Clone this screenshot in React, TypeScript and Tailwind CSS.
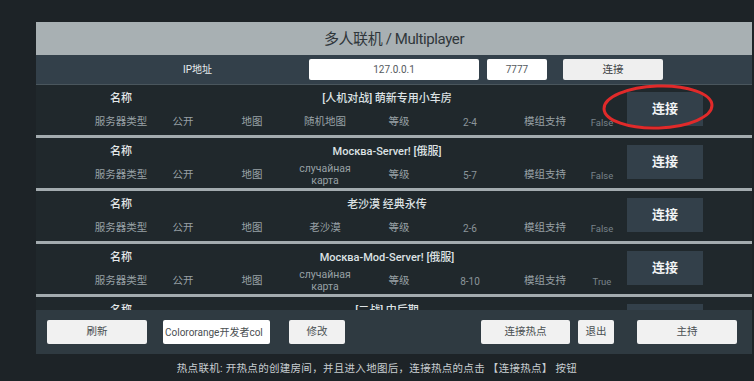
import React from "react";

type Server = { name: string; type: string; map: string[]; level: string; mod: string; partial?: boolean };

const servers: Server[] = [
  { name: "[人机对战] 萌新专用小车房", type: "公开", map: ["随机地图"], level: "2-4", mod: "False" },
  { name: "Москва-Server! [俄服]", type: "公开", map: ["случайная", "карта"], level: "5-7", mod: "False" },
  { name: "老沙漠 经典永传", type: "公开", map: ["老沙漠"], level: "2-6", mod: "False" },
  { name: "Москва-Mod-Server! [俄服]", type: "公开", map: ["случайная", "карта"], level: "8-10", mod: "True" },
  { name: "[二战] 中后期", type: "公开", map: ["随机地图"], level: "2-4", mod: "False", partial: true },
];

const cols = "grid grid-cols-[70px_54px_84px_62px_86px_56px_94px_20px]";

function Cell({ children, className = "" }: { children: React.ReactNode; className?: string }) {
  return <div className={`flex flex-col items-center justify-center whitespace-nowrap ${className}`}>{children}</div>;
}

function Row({ s }: { s: Server }) {
  return (
    <div className={`${s.partial ? "h-[14px] overflow-hidden" : "h-[50px]"} shrink-0 bg-[#20282c] flex`}>
      <div className="w-[591px] pl-[50px] flex flex-col">
        <div className={`${cols} h-[20px] mt-[4px] shrink-0`}>
          <Cell className="text-[11px] font-medium text-[#e4e8ea]">名称</Cell>
          <div className="col-span-7 flex items-center justify-center pl-[6px] text-[11px] font-medium text-[#dde2e4] whitespace-nowrap">
            {s.name}
          </div>
        </div>
        {!s.partial && (
          <div className={`${cols} h-[26px]`}>
            <Cell className="text-[10.5px] text-[#98a1a6]">服务器类型</Cell>
            <Cell className="text-[10.5px] text-[#98a1a6]">{s.type}</Cell>
            <Cell className="text-[10.5px] text-[#98a1a6]">地图</Cell>
            <Cell className="text-[10.5px] leading-[12px] text-[#98a1a6]">
              {s.map.map((m) => (
                <span key={m}>{m}</span>
              ))}
            </Cell>
            <Cell className="text-[10.5px] text-[#98a1a6]">等级</Cell>
            <Cell className="text-[10px] text-[#8b959a]">{s.level}</Cell>
            <Cell className="text-[10.5px] text-[#98a1a6]">模组支持</Cell>
            <Cell className="text-[9.5px] text-[#78838a] pt-[3px]">{s.mod}</Cell>
          </div>
        )}
      </div>
      <div className="w-[76px] h-[34px] mt-[7px] shrink-0 bg-[#33404a] flex items-center justify-center text-[13px] font-bold text-[#f2f4f5]">
        {s.partial ? "" : "连接"}
      </div>
    </div>
  );
}

function LightBtn({ children, className = "" }: { children: React.ReactNode; className?: string }) {
  return (
    <div className={`h-[24px] bg-[#f1f1f1] rounded-[2px] flex items-center justify-center text-[10.5px] text-[#4a4f52] ${className}`}>
      {children}
    </div>
  );
}

export default function App() {
  return (
    <div className="relative w-[754px] h-[381px] overflow-hidden bg-[#1d2327] font-['Roboto','Noto_Sans_CJK_SC',sans-serif]">
      <div className="ml-[36px] mr-[2px] pt-[22px]">
        <div className="h-[33px] bg-[#a8b0b3] flex items-center justify-center text-[15px] tracking-[-0.4px] text-[#30373b] pt-[2px]">
          多人联机 / Multiplayer
        </div>
        <div className="h-[30px] bg-[#33404a] flex items-center border-b border-[#4a565d]">
          <div className="w-[273px] pl-[147px] text-[10px] text-[#e8ecee]">IP地址</div>
          <div className="w-[170px] h-[21px] bg-white rounded-[2px] flex items-center justify-center text-[10px] text-[#555a5e]">
            127.0.0.1
          </div>
          <div className="ml-[8px] w-[60px] h-[21px] bg-white rounded-[2px] flex items-center justify-center text-[10px] text-[#555a5e]">
            7777
          </div>
          <div className="ml-[16px] w-[100px] h-[21px] bg-[#efefef] rounded-[2px] flex items-center justify-center text-[10.5px] text-[#3d4245]">
            连接
          </div>
        </div>
        <div className="h-[225px] overflow-hidden flex flex-col">
          {servers.map((s, i) => (
            <React.Fragment key={i}>
              <Row s={s} />
              {i < servers.length - 1 && <div className="h-[3px] shrink-0 bg-[#a3abaf]" />}
            </React.Fragment>
          ))}
        </div>
        <div className="h-[44px] bg-[#2f3a41] flex items-center pl-[11px]">
          <LightBtn className="w-[100px]">刷新</LightBtn>
          <div className="ml-[16px] w-[107px] h-[24px] bg-white rounded-[2px] flex items-center pl-[2px] overflow-hidden whitespace-nowrap text-[10px] text-[#4a4f52]">
            Colororange开发者col
          </div>
          <LightBtn className="ml-[19px] w-[56px]">修改</LightBtn>
          <LightBtn className="ml-[136px] w-[89px]">连接热点</LightBtn>
          <LightBtn className="ml-[8px] w-[36px]">退出</LightBtn>
          <LightBtn className="ml-[23px] w-[100px]">主持</LightBtn>
        </div>
      </div>
      <div className="h-[26px] flex items-center justify-center pt-[3px] text-[10.5px] tracking-[0.3px] text-[#c8ced1] whitespace-nowrap">
        热点联机: 开热点的创建房间，并且进入地图后，连接热点的点击 【连接热点】 按钮
      </div>
      <svg className="absolute left-[600px] top-[83px]" width="118" height="48" viewBox="0 0 118 48">
        <ellipse cx="58" cy="24" rx="54" ry="21" fill="none" stroke="#e12a2a" strokeWidth="3" transform="rotate(-2 58 24)" />
      </svg>
    </div>
  );
}
